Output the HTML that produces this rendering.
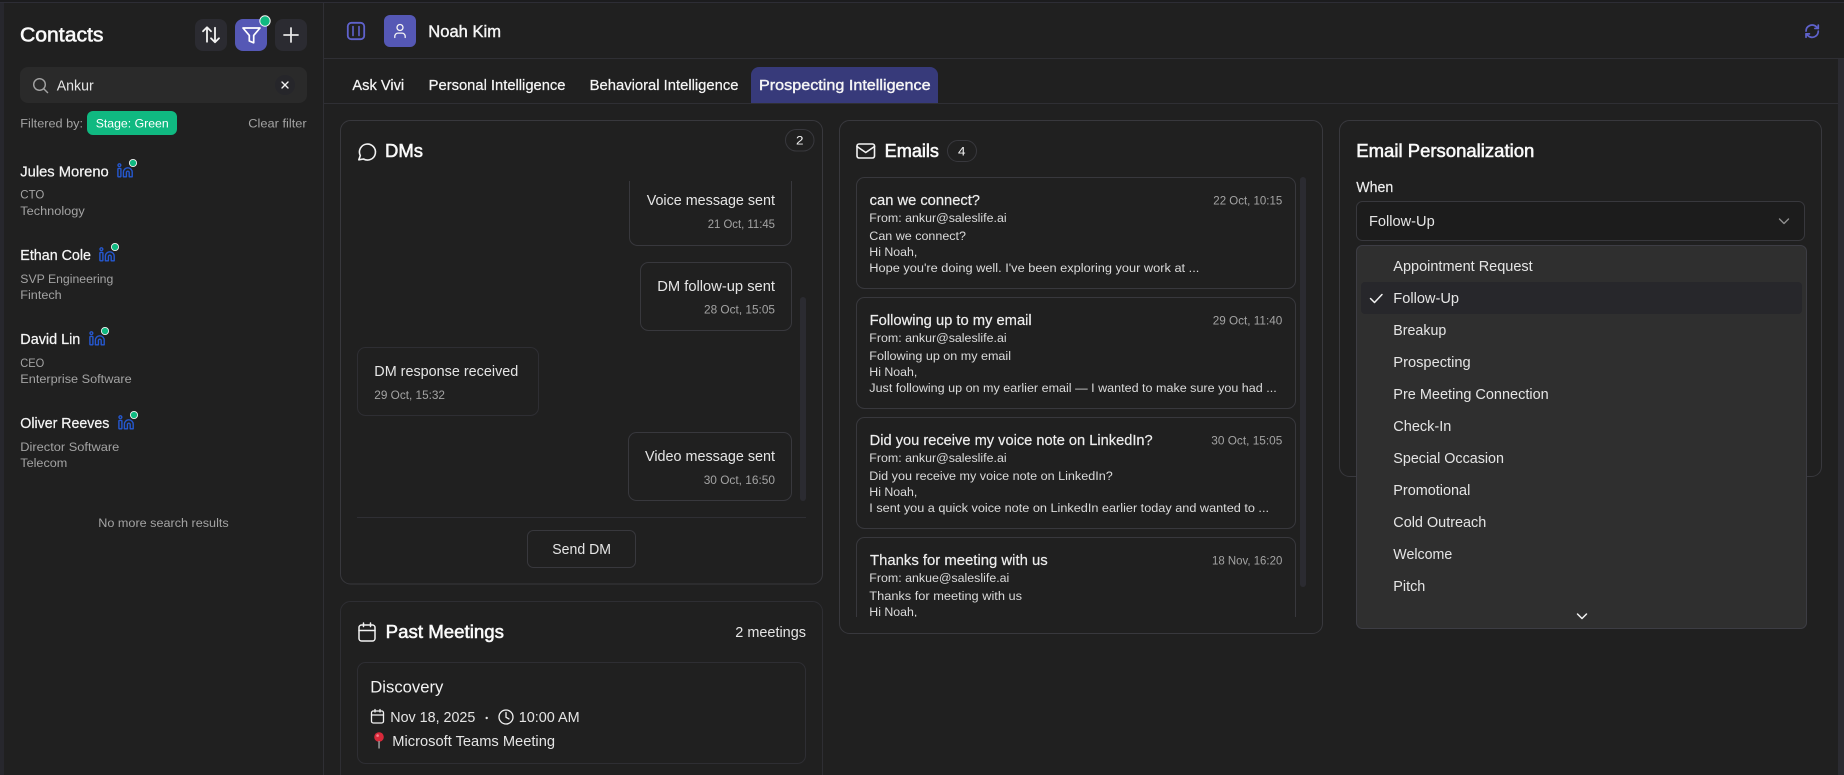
<!DOCTYPE html>
<html lang="en"><head><meta charset="utf-8"><title>Contacts - Noah Kim</title>
<style>
html,body{margin:0;padding:0;width:1844px;height:775px;overflow:hidden;background:#202020}
svg{display:block}
text{font-family:"Liberation Sans",sans-serif;fill:#e5e5e5;font-size:14.4px}
.m{fill:#f5f5f5;stroke:#f5f5f5;stroke-width:.22px}
.b{fill:#fafafa;stroke:#fafafa;stroke-width:.55px}
.s{font-size:12.4px;fill:#a3a3a3}
.e{font-size:12.4px;fill:#dadada}
.w{fill:#fff}
.ic{fill:none;stroke:#f2f2f2;stroke-width:1.5;stroke-linecap:round;stroke-linejoin:round}
.bx{fill:none;stroke:#38383d}
.bd{fill:none;stroke:#2e2e33}
</style></head><body>
<svg xmlns="http://www.w3.org/2000/svg" width="1844" height="775" viewBox="0 0 1844 775">
<defs>
<g id="li" fill="none" stroke="#2558d0" stroke-width="1.4" stroke-linejoin="round">
<circle cx="2.4" cy="2.2" r="1.4"/>
<rect x=".9" y="5.4" width="3" height="8.4" rx=".7"/>
<path d="M6.4 13.8V9.2a4.4 4.4 0 0 1 8.8 0v4.6h-3V9.6a1.4 1.4 0 0 0-2.8 0v4.2z"/>
</g>
<clipPath id="dmclip"><rect x="340" y="181" width="482" height="330"/></clipPath>
<clipPath id="emclip"><rect x="840" y="170" width="480" height="447"/></clipPath>
</defs>

<rect width="1844" height="775" fill="#202020"/>
<rect x="0" y="0" width="1844" height="2" fill="#1c1c1e"/>
<rect x="0" y="2" width="1844" height="1" fill="#2d2d35"/>
<rect x="0" y="3" width="4" height="772" fill="#27272d"/>
<rect x="323" y="3" width="1" height="772" fill="#2f2f34"/>
<rect x="324" y="58" width="1520" height="1" fill="#2f2f34"/>
<rect x="324" y="103" width="1520" height="1" fill="#2f2f34"/>
<rect x="1838" y="59" width="6" height="716" fill="#2b2b31"/>

<!-- Sidebar -->
<text x="20" y="41.5" class="b" style="font-size:20px" textLength="83.5" lengthAdjust="spacingAndGlyphs">Contacts</text>
<rect x="195" y="19" width="32" height="32" rx="8" fill="#2b2b31"/>
<path class="ic" stroke-width="1.8" d="M207 42V27.5M203 31.5l4-4 4 4M215 28v14.5M211 38.5l4 4 4-4" transform="translate(0 -.2)" style="stroke-width:1.8"/>
<rect x="235" y="19" width="32" height="32" rx="8" fill="#5558b5"/>
<path class="ic" style="stroke-width:1.7;stroke:#fff" d="M243 28h17l-6.3 7.4v7.4l-4.4-1.8v-5.6z"/>
<rect x="275" y="19" width="32" height="32" rx="8" fill="#2b2b31"/>
<path class="ic" style="stroke:#e5e5e5;stroke-width:1.8" d="M291 28v14M284 35h14"/>
<circle cx="265" cy="21" r="5.2" fill="#10b981" stroke="#f5f5f5" stroke-width="1"/>

<rect x="20" y="67" width="287" height="36" rx="8" fill="#2a2a2a"/>
<circle cx="39.5" cy="84.5" r="5.8" fill="none" stroke="#a3a3a3" stroke-width="1.4"/>
<path d="M44 89l3.6 3.6" stroke="#a3a3a3" stroke-width="1.4" stroke-linecap="round"/>
<text x="56.7" y="90.5" textLength="37" lengthAdjust="spacingAndGlyphs">Ankur</text>
<circle cx="285" cy="85" r="10" fill="#26262a"/>
<path d="M282 82l6 6M288 82l-6 6" stroke="#f2f2f2" stroke-width="1.4" stroke-linecap="round"/>

<text x="20.3" y="127.5" class="s" textLength="62.7" lengthAdjust="spacingAndGlyphs">Filtered by:</text>
<rect x="87" y="111" width="90" height="24" rx="6" fill="#10b981"/>
<text x="95.7" y="127.5" class="s" style="fill:#fff" textLength="73" lengthAdjust="spacingAndGlyphs">Stage: Green</text>
<text x="248.3" y="127.5" class="s" textLength="58.4" lengthAdjust="spacingAndGlyphs">Clear filter</text>

<text x="20.3" y="176.5" class="m" textLength="88.4" lengthAdjust="spacingAndGlyphs">Jules Moreno</text>
<use href="#li" x="117" y="163"/>
<circle cx="133" cy="163" r="3.6" fill="#10b981" stroke="#f2f2f2" stroke-width=".9"/>
<text x="20.3" y="198.5" class="s" textLength="24" lengthAdjust="spacingAndGlyphs">CTO</text>
<text x="20.3" y="215" class="s" textLength="64.4" lengthAdjust="spacingAndGlyphs">Technology</text>

<text x="20.3" y="260" class="m" textLength="70.7" lengthAdjust="spacingAndGlyphs">Ethan Cole</text>
<use href="#li" x="99" y="247"/>
<circle cx="115" cy="247" r="3.6" fill="#10b981" stroke="#f2f2f2" stroke-width=".9"/>
<text x="20.3" y="283" class="s" textLength="93" lengthAdjust="spacingAndGlyphs">SVP Engineering</text>
<text x="20.3" y="299" class="s" textLength="41.4" lengthAdjust="spacingAndGlyphs">Fintech</text>

<text x="20.3" y="344" class="m" textLength="60" lengthAdjust="spacingAndGlyphs">David Lin</text>
<use href="#li" x="89" y="331"/>
<circle cx="105" cy="331" r="3.6" fill="#10b981" stroke="#f2f2f2" stroke-width=".9"/>
<text x="20.3" y="367" class="s" textLength="24" lengthAdjust="spacingAndGlyphs">CEO</text>
<text x="20.3" y="383" class="s" textLength="111.4" lengthAdjust="spacingAndGlyphs">Enterprise Software</text>

<text x="20.3" y="428" class="m" textLength="89" lengthAdjust="spacingAndGlyphs">Oliver Reeves</text>
<use href="#li" x="118" y="415"/>
<circle cx="134" cy="415" r="3.6" fill="#10b981" stroke="#f2f2f2" stroke-width=".9"/>
<text x="20.3" y="451" class="s" textLength="99" lengthAdjust="spacingAndGlyphs">Director Software</text>
<text x="20.3" y="467" class="s" textLength="47" lengthAdjust="spacingAndGlyphs">Telecom</text>

<text x="98.3" y="527" class="s" textLength="130.4" lengthAdjust="spacingAndGlyphs">No more search results</text>

<!-- Header -->
<rect x="347.8" y="22.8" width="16.4" height="16.4" rx="3.5" fill="none" stroke="#5f62cc" stroke-width="1.8"/>
<path d="M353 26.5v9M359 26.5v9" stroke="#5f62cc" stroke-width="1.6" stroke-linecap="round"/>
<rect x="384" y="15" width="32" height="32" rx="6" fill="#5558b5"/>
<circle cx="400" cy="27.5" r="3" fill="none" stroke="#f5f5f5" stroke-width="1.3"/>
<path d="M394.8 37.5v-1.2a3.2 3.2 0 0 1 3.2-3.2h4a3.2 3.2 0 0 1 3.2 3.2v1.2" fill="none" stroke="#f5f5f5" stroke-width="1.3" stroke-linecap="round"/>
<text x="428.3" y="37" class="m" style="font-size:16.4px;stroke-width:.4px" textLength="72.7" lengthAdjust="spacingAndGlyphs">Noah Kim</text>
<g fill="none" stroke="#5f62cc" stroke-width="2.5" stroke-linecap="round" stroke-linejoin="round" transform="translate(1804 23) scale(.68)">
<path d="M3 12a9 9 0 0 1 15-6.7L21 8"/><path d="M21 3v5h-5"/><path d="M21 12a9 9 0 0 1-15 6.7L3 16"/><path d="M8 16H3v5"/>
</g>

<!-- Tabs -->
<path d="M751 103V75a8 8 0 0 1 8-8h171a8 8 0 0 1 8 8v28z" fill="#373a7a"/>
<text x="352.4" y="90" class="m" textLength="51.8" lengthAdjust="spacingAndGlyphs">Ask Vivi</text>
<text x="428.7" y="90" class="m" textLength="136.8" lengthAdjust="spacingAndGlyphs">Personal Intelligence</text>
<text x="589.7" y="90" class="m" textLength="148.8" lengthAdjust="spacingAndGlyphs">Behavioral Intelligence</text>
<text x="759" y="90" class="m" style="stroke-width:.4px" textLength="171.6" lengthAdjust="spacingAndGlyphs">Prospecting Intelligence</text>

<!-- DMs -->
<rect x="340.5" y="120.5" width="482" height="463.5" rx="10" class="bx"/>
<path class="ic" d="M358.8 159.8l1.5-4.2a8 8 0 1 1 3.2 3.4z" style="stroke-width:1.6"/>
<text x="385" y="157" class="b" style="font-size:18px" textLength="38" lengthAdjust="spacingAndGlyphs">DMs</text>
<rect x="785.5" y="129.5" width="28.5" height="21.5" rx="10.7" class="bx"/>
<text x="796" y="144.5" class="e" style="fill:#f2f2f2" textLength="7.5" lengthAdjust="spacingAndGlyphs">2</text>

<g clip-path="url(#dmclip)">
<rect x="629.5" y="160" width="162" height="85.5" rx="8" class="bx"/>
<text x="646.7" y="205" textLength="128.3" lengthAdjust="spacingAndGlyphs">Voice message sent</text>
<text x="707.7" y="228" class="s" textLength="67.3" lengthAdjust="spacingAndGlyphs">21 Oct, 11:45</text>
<rect x="640.5" y="262.5" width="151" height="68" rx="8" class="bx"/>
<text x="657.3" y="291" textLength="117.7" lengthAdjust="spacingAndGlyphs">DM follow-up sent</text>
<text x="704" y="313.5" class="s" textLength="71" lengthAdjust="spacingAndGlyphs">28 Oct, 15:05</text>
<rect x="357.5" y="347.5" width="181" height="68" rx="8" class="bd"/>
<text x="374.3" y="376" textLength="144" lengthAdjust="spacingAndGlyphs">DM response received</text>
<text x="374.3" y="399" class="s" textLength="70.7" lengthAdjust="spacingAndGlyphs">29 Oct, 15:32</text>
<rect x="628.5" y="432.5" width="163" height="68" rx="8" class="bx"/>
<text x="645" y="461" textLength="130" lengthAdjust="spacingAndGlyphs">Video message sent</text>
<text x="703.7" y="484" class="s" textLength="71.3" lengthAdjust="spacingAndGlyphs">30 Oct, 16:50</text>
</g>
<rect x="800" y="297" width="6" height="204" rx="3" fill="#2b2b31"/>
<rect x="357" y="517" width="449" height="1" fill="#2f2f34"/>
<rect x="527.5" y="530.5" width="108" height="37" rx="6" class="bx"/>
<text x="552.3" y="554" textLength="58.7" lengthAdjust="spacingAndGlyphs">Send DM</text>

<!-- Past Meetings -->
<rect x="340.5" y="601.5" width="482" height="200" rx="10" class="bd"/>
<g class="ic"><rect x="359" y="625" width="16" height="16" rx="2.5"/><path d="M359 630.5h16M363.5 623v3.5M370.5 623v3.5"/></g>
<text x="385.7" y="638" class="b" style="font-size:18px" textLength="118.3" lengthAdjust="spacingAndGlyphs">Past Meetings</text>
<text x="735.3" y="637" textLength="70.7" lengthAdjust="spacingAndGlyphs">2 meetings</text>
<rect x="357.5" y="662.5" width="448" height="101" rx="8" class="bd"/>
<text x="370.3" y="692.5" style="font-size:16.4px;fill:#f2f2f2" textLength="73" lengthAdjust="spacingAndGlyphs">Discovery</text>
<g class="ic" style="stroke-width:1.3"><rect x="371.5" y="711" width="12" height="12" rx="1.8"/><path d="M371.5 715h12M375 709.5v2.5M380 709.5v2.5"/></g>
<text x="390.3" y="722" textLength="85" lengthAdjust="spacingAndGlyphs">Nov 18, 2025</text>
<circle cx="486.7" cy="718" r="1.2" fill="#e5e5e5"/>
<circle cx="506" cy="717" r="7" class="ic" style="stroke-width:1.3"/>
<path class="ic" style="stroke-width:1.3" d="M506 712.5v4.8l3 1.6"/>
<text x="518.7" y="722" textLength="61" lengthAdjust="spacingAndGlyphs">10:00 AM</text>
<circle cx="379" cy="737" r="4.8" fill="#d8293a"/><circle cx="377.6" cy="735.6" r="1.3" fill="#f0808a"/>
<rect x="378.3" y="741" width="1.5" height="7.5" fill="#9a9a9a"/>
<text x="392.3" y="746" textLength="162.7" lengthAdjust="spacingAndGlyphs">Microsoft Teams Meeting</text>

<!-- Emails -->
<rect x="839.5" y="120.5" width="483" height="513" rx="10" class="bx"/>
<g class="ic" style="stroke-width:1.6"><rect x="857" y="144" width="17.5" height="14" rx="2"/><path d="M857 146.5l8.75 6 8.75-6"/></g>
<text x="884.7" y="157" class="b" style="font-size:18px" textLength="54.3" lengthAdjust="spacingAndGlyphs">Emails</text>
<rect x="947.5" y="140.5" width="29" height="21" rx="10.5" class="bx"/>
<text x="958" y="155.5" class="e" style="fill:#f2f2f2" textLength="7.5" lengthAdjust="spacingAndGlyphs">4</text>
<rect x="1300" y="177" width="6" height="410" rx="3" fill="#2b2b31"/>

<g clip-path="url(#emclip)">
<rect x="856.5" y="177.5" width="439" height="111" rx="8" class="bx"/>
<text x="869.7" y="205" class="m" style="stroke-width:.18px;fill:#ececec" textLength="110.3" lengthAdjust="spacingAndGlyphs">can we connect?</text>
<text x="1213.3" y="204.5" class="s" textLength="69" lengthAdjust="spacingAndGlyphs">22 Oct, 10:15</text>
<text x="869.3" y="222" class="e" textLength="137.3" lengthAdjust="spacingAndGlyphs">From: ankur@saleslife.ai</text>
<text x="869.3" y="240" class="e" textLength="96.7" lengthAdjust="spacingAndGlyphs">Can we connect?</text>
<text x="869.3" y="256" class="e" textLength="48" lengthAdjust="spacingAndGlyphs">Hi Noah,</text>
<text x="869.3" y="272" class="e" textLength="330" lengthAdjust="spacingAndGlyphs">Hope you're doing well. I've been exploring your work at ...</text>

<rect x="856.5" y="297.5" width="439" height="111" rx="8" class="bx"/>
<text x="869.7" y="325" class="m" style="stroke-width:.18px;fill:#ececec" textLength="162" lengthAdjust="spacingAndGlyphs">Following up to my email</text>
<text x="1212.7" y="324.5" class="s" textLength="69.6" lengthAdjust="spacingAndGlyphs">29 Oct, 11:40</text>
<text x="869.3" y="342" class="e" textLength="137.3" lengthAdjust="spacingAndGlyphs">From: ankur@saleslife.ai</text>
<text x="869.3" y="360" class="e" textLength="141.7" lengthAdjust="spacingAndGlyphs">Following up on my email</text>
<text x="869.3" y="376" class="e" textLength="48" lengthAdjust="spacingAndGlyphs">Hi Noah,</text>
<text x="869.3" y="392" class="e" textLength="407.4" lengthAdjust="spacingAndGlyphs">Just following up on my earlier email — I wanted to make sure you had ...</text>

<rect x="856.5" y="417.5" width="439" height="111" rx="8" class="bx"/>
<text x="869.7" y="445" class="m" style="stroke-width:.18px;fill:#ececec" textLength="283" lengthAdjust="spacingAndGlyphs">Did you receive my voice note on LinkedIn?</text>
<text x="1211.3" y="444.5" class="s" textLength="71" lengthAdjust="spacingAndGlyphs">30 Oct, 15:05</text>
<text x="869.3" y="462" class="e" textLength="137.3" lengthAdjust="spacingAndGlyphs">From: ankur@saleslife.ai</text>
<text x="869.3" y="480" class="e" textLength="243.4" lengthAdjust="spacingAndGlyphs">Did you receive my voice note on LinkedIn?</text>
<text x="869.3" y="496" class="e" textLength="48" lengthAdjust="spacingAndGlyphs">Hi Noah,</text>
<text x="869.3" y="512" class="e" textLength="399.7" lengthAdjust="spacingAndGlyphs">I sent you a quick voice note on LinkedIn earlier today and wanted to ...</text>

<rect x="856.5" y="537.5" width="439" height="111" rx="8" class="bx"/>
<text x="870" y="565" class="m" style="stroke-width:.18px;fill:#ececec" textLength="177.7" lengthAdjust="spacingAndGlyphs">Thanks for meeting with us</text>
<text x="1212" y="564.5" class="s" textLength="70.3" lengthAdjust="spacingAndGlyphs">18 Nov, 16:20</text>
<text x="869.3" y="582" class="e" textLength="140" lengthAdjust="spacingAndGlyphs">From: ankue@saleslife.ai</text>
<text x="869.3" y="600" class="e" textLength="152.7" lengthAdjust="spacingAndGlyphs">Thanks for meeting with us</text>
<text x="869.3" y="616" class="e" textLength="48" lengthAdjust="spacingAndGlyphs">Hi Noah,</text>
</g>

<!-- Email Personalization -->
<rect x="1339.5" y="120.5" width="482" height="356" rx="10" class="bx"/>
<text x="1356.3" y="157" class="b" style="font-size:18px" textLength="178" lengthAdjust="spacingAndGlyphs">Email Personalization</text>
<text x="1356.3" y="192" class="m" style="stroke-width:.15px;fill:#ececec" textLength="37" lengthAdjust="spacingAndGlyphs">When</text>
<rect x="1356.5" y="201.5" width="448" height="39" rx="6" fill="#1c1c1c" stroke="#38383d"/>
<text x="1369" y="226" textLength="65.7" lengthAdjust="spacingAndGlyphs">Follow-Up</text>
<path d="M1779.5 219l4.5 4.5 4.5-4.5" fill="none" stroke="#8f8f8f" stroke-width="1.4" stroke-linecap="round" stroke-linejoin="round"/>

<rect x="1356.5" y="245.5" width="450" height="383" rx="6" fill="#2f2f2f" stroke="#3d3d44"/>
<rect x="1361" y="282" width="441" height="32" rx="4" fill="#27272b"/>
<path d="M1370.5 298.5l4 4 7.5-8" fill="none" stroke="#f2f2f2" stroke-width="1.5" stroke-linecap="round" stroke-linejoin="round"/>
<text x="1393.3" y="271" textLength="139.4" lengthAdjust="spacingAndGlyphs">Appointment Request</text>
<text x="1393.3" y="303" textLength="65.7" lengthAdjust="spacingAndGlyphs">Follow-Up</text>
<text x="1393.3" y="335" textLength="53" lengthAdjust="spacingAndGlyphs">Breakup</text>
<text x="1393.3" y="367" textLength="77.4" lengthAdjust="spacingAndGlyphs">Prospecting</text>
<text x="1393.3" y="399" textLength="155.4" lengthAdjust="spacingAndGlyphs">Pre Meeting Connection</text>
<text x="1393.3" y="431" textLength="58" lengthAdjust="spacingAndGlyphs">Check-In</text>
<text x="1393.3" y="463" textLength="110.7" lengthAdjust="spacingAndGlyphs">Special Occasion</text>
<text x="1393.3" y="495" textLength="77" lengthAdjust="spacingAndGlyphs">Promotional</text>
<text x="1393.3" y="527" textLength="93" lengthAdjust="spacingAndGlyphs">Cold Outreach</text>
<text x="1393.3" y="559" textLength="59" lengthAdjust="spacingAndGlyphs">Welcome</text>
<text x="1393.3" y="591" textLength="32" lengthAdjust="spacingAndGlyphs">Pitch</text>
<path d="M1577.5 614l4.5 4.5 4.5-4.5" fill="none" stroke="#f2f2f2" stroke-width="1.5" stroke-linecap="round" stroke-linejoin="round"/>
</svg>
</body></html>
